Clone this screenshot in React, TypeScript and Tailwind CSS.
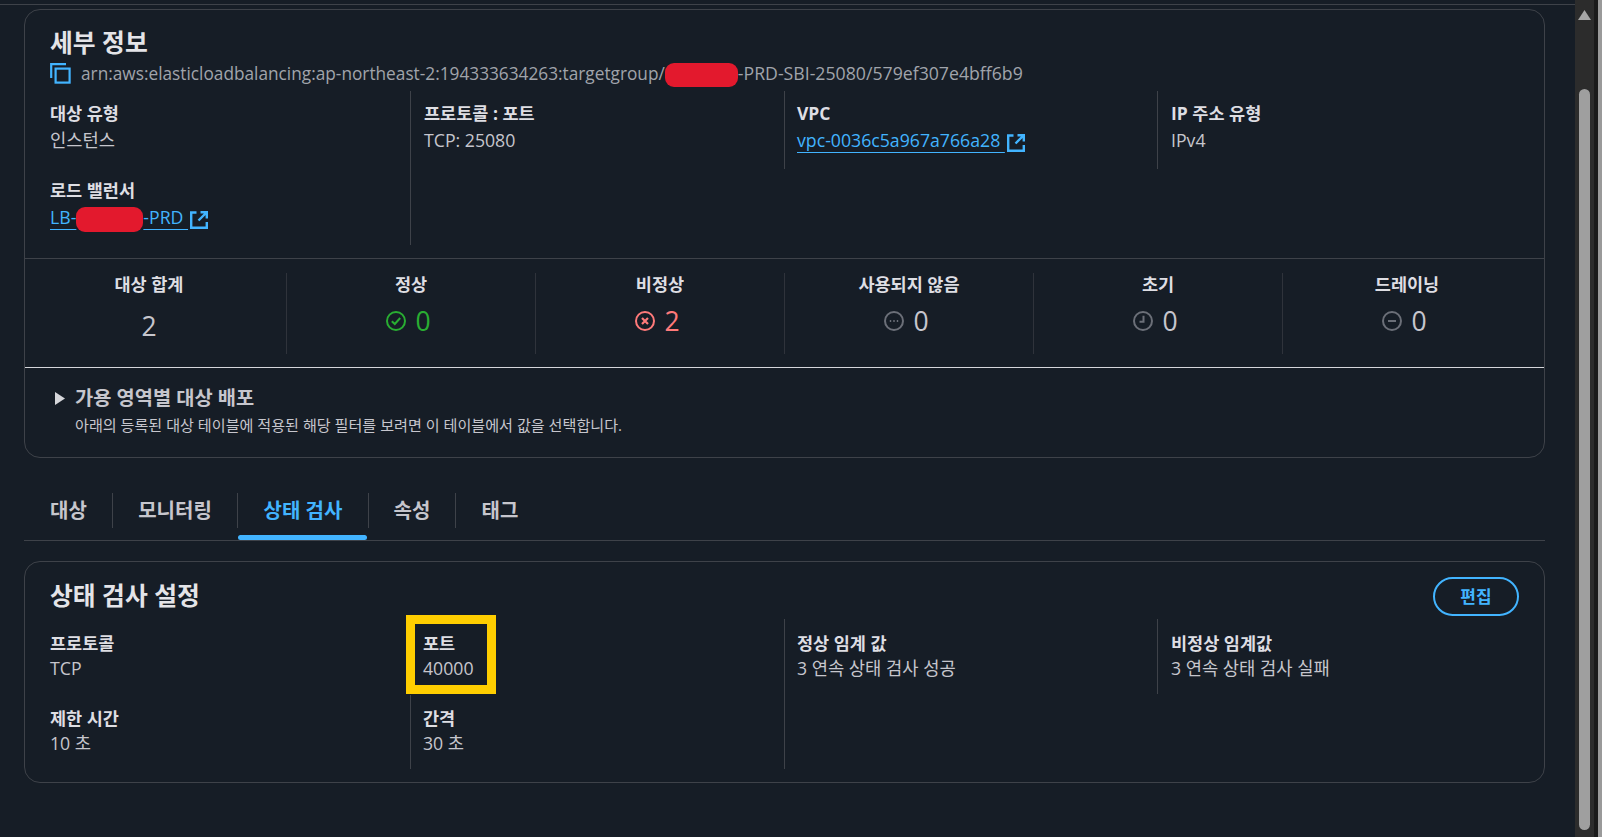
import React from 'react';

const FONT = { fontFamily: '"Open Sans", "Noto Sans CJK KR", sans-serif' };

function CopyIcon() {
  return (
    <svg width="21" height="21" viewBox="0 0 21 21" fill="none" stroke="#42b4ff" strokeWidth="2.2" className="shrink-0">
      <path d="M1.2 15V1.2H16" />
      <rect x="5.6" y="5.6" width="14" height="14" />
    </svg>
  );
}

function ExternalIcon() {
  return (
    <svg width="18" height="18" viewBox="0 0 18 18" fill="none" stroke="#42b4ff" strokeWidth="2.4" className="inline-block shrink-0">
      <path d="M6.5 1.5H1.2V16.8H16.8V11" />
      <path d="M10.5 1.2H16.8V7.5M16.5 1.5L8.5 9.5" />
    </svg>
  );
}

function StatusIcon({ kind }: { kind: 'ok' | 'bad' | 'unused' | 'init' | 'drain' }) {
  const color = kind === 'ok' ? '#29ad32' : kind === 'bad' ? '#ff7a7a' : '#6b6f78';
  return (
    <svg width="20" height="20" viewBox="0 0 20 20" fill="none" stroke={color} strokeWidth="2" className="shrink-0">
      <circle cx="10" cy="10" r="9" />
      {kind === 'ok' && <path d="M5.8 10.2L8.8 13L14.2 7" />}
      {kind === 'bad' && <path d="M7 7L13 13M13 7L7 13" strokeWidth="2.2" />}
      {kind === 'unused' && <path d="M5.8 10H7.2M9.3 10H10.7M12.8 10H14.2" />}
      {kind === 'init' && <path d="M10.5 4.8V10.8H6.5" />}
      {kind === 'drain' && <path d="M6 10H14" />}
    </svg>
  );
}

function Redact({ className }: { className: string }) {
  return <span className={`inline-block align-middle rounded-[9px] bg-[#e3192d] -my-1 ${className}`} />;
}

function Item({ label, tight, children }: { label: string; tight?: boolean; children: React.ReactNode }) {
  return (
    <div className={tight ? 'h-[75px] pt-[13px]' : 'h-[77px] pt-[11px]'}>
      <div className="text-[17.5px] leading-[23px] font-bold text-[#dedee3]">{label}</div>
      <div className={`text-[17.7px] leading-[23px] text-[#c6c6cd] ${tight ? 'mt-[2px]' : 'mt-[4px]'}`}>{children}</div>
    </div>
  );
}

function Stat({ label, value, kind, first }: { label: string; value: string; kind?: 'ok' | 'bad' | 'unused' | 'init' | 'drain'; first?: boolean }) {
  const valueColor = kind === 'ok' ? 'text-[#29ad32]' : kind === 'bad' ? 'text-[#ff7a7a]' : 'text-[#c6c6cd]';
  return (
    <div className={`h-[81px] flex flex-col items-center ${first ? 'w-[249px] pr-[25px]' : 'w-[249px] border-l border-[#2f333b]'}`}>
      <div className="text-[17.5px] leading-[23px] font-bold text-[#dedee3]">{label}</div>
      <div className={`flex items-center gap-[9px] text-[26.5px] leading-[30px] ${valueColor} ${first ? 'mt-[15px]' : 'mt-[10px] pr-[5px]'}`}>
        {kind && <StatusIcon kind={kind} />}
        <span>{value}</span>
      </div>
    </div>
  );
}

function Tab({ label, active, last, w }: { label: string; active?: boolean; last?: boolean; w: string }) {
  return (
    <div className={`relative h-[35px] ${w} flex items-center justify-center ${last ? '' : 'border-r border-[#3e4249]'}`}>
      <span className={`text-[20px] font-bold ${active ? 'text-[#42b4ff]' : 'text-[#c6c6cd]'}`}>{label}</span>
      {active && <div className="absolute left-0 right-[1px] top-[42px] h-[5px] rounded-[3px] bg-[#42b4ff]" />}
    </div>
  );
}

export default function App() {
  return (
    <div className="flex h-[837px] w-[1602px] overflow-hidden bg-[#161d26]" style={FONT}>
      <main className="w-[1575px] shrink-0 pt-[4px]">
        <div className="h-px bg-[#3e4249]" />
        <div className="pt-[4px] pl-[24px] w-[1545px]">
          {/* details card */}
          <section className="h-[449px] rounded-[16px] border border-[#3e4249]">
            <div className="px-[25px] pt-[16px]">
              <h2 className="text-[24.8px] leading-[33px] font-bold text-[#e4e4e8]">세부 정보</h2>
              <div className="flex items-center gap-[10px] mt-[3px] h-[22px]">
                <CopyIcon />
                <span className="text-[17.25px] whitespace-nowrap text-[#a0a4ab]">
                  arn:aws:elasticloadbalancing:ap-northeast-2:194333634263:targetgroup/<Redact className="w-[73px] h-[24px]" /><span className="text-[17.7px]">-PRD-SBI-25080/579ef307e4bff6b9</span>
                </span>
              </div>
            </div>
            <div className="grid grid-cols-[373px_374px_373px_373px] h-[153px] pl-[12px] mt-[7px]">
              <div className="pl-[13px]">
                <Item label="대상 유형">인스턴스</Item>
                <Item label="로드 밸런서">
                  <span className="text-[#42b4ff] underline decoration-1 underline-offset-[5px]">LB-<Redact className="w-[67px] h-[25px]" />-PRD&nbsp;</span>
                  <span className="inline-block align-[-1px] ml-[2px]"><ExternalIcon /></span>
                </Item>
              </div>
              <div className="pl-[13px] border-l border-[#3e4249]">
                <Item label="프로토콜 : 포트">TCP: 25080</Item>
              </div>
              <div className="pl-[12px] border-l border-[#3e4249] h-[78px]">
                <Item label="VPC">
                  <span className="text-[#42b4ff] underline decoration-1 underline-offset-[5px]">vpc-0036c5a967a766a28&nbsp;</span>
                  <span className="inline-block align-[-1px] ml-[2px]"><ExternalIcon /></span>
                </Item>
              </div>
              <div className="pl-[13px] border-l border-[#3e4249] h-[78px]">
                <Item label="IP 주소 유형">IPv4</Item>
              </div>
            </div>
            <div className="h-px mt-[14px] bg-[#3e4249]" />
            <div className="flex pt-[14px] pl-[12px] pb-[13px]">
              <Stat first label="대상 합계" value="2" />
              <Stat label="정상" value="0" kind="ok" />
              <Stat label="비정상" value="2" kind="bad" />
              <Stat label="사용되지 않음" value="0" kind="unused" />
              <Stat label="초기" value="0" kind="init" />
              <Stat label="드레이닝" value="0" kind="drain" />
            </div>
            <div className="h-px bg-[#d5d6da]" />
            <div className="flex pl-[30px] pt-[17px]">
              <svg width="10" height="13" viewBox="0 0 10 13" className="mt-[7px] shrink-0"><path d="M0 0L10 6.5L0 13Z" fill="#d5d6da" /></svg>
              <div className="ml-[10px]">
                <div className="text-[19.8px] leading-[26px] font-bold text-[#c6c6cd]">가용 영역별 대상 배포</div>
                <div className="text-[15.1px] leading-[20px] mt-[4px] text-[#c6c6cd]">아래의 등록된 대상 테이블에 적용된 해당 필터를 보려면 이 테이블에서 값을 선택합니다.</div>
              </div>
            </div>
          </section>

          {/* tabs */}
          <div className="flex items-center h-[48px] mt-[35px] border-b border-[#3e4249] pb-[12px] pl-px">
            <Tab label="대상" w="w-[88px]" />
            <Tab label="모니터링" w="w-[125px]" />
            <Tab active label="상태 검사" w="w-[131px]" />
            <Tab label="속성" w="w-[87px]" />
            <Tab last label="태그" w="w-[88px]" />
          </div>

          {/* health check card */}
          <section className="h-[222px] mt-[20px] rounded-[16px] border border-[#3e4249]">
            <div className="flex justify-between items-start pl-[25px] pr-[25px] pt-[15px]">
              <h2 className="text-[24.8px] leading-[36px] font-bold text-[#e4e4e8]">상태 검사 설정</h2>
              <button className="w-[86px] h-[39px] rounded-full border-2 border-[#42b4ff] text-[17px] font-bold text-[#42b4ff]">편집</button>
            </div>
            <div className="grid grid-cols-[373px_374px_373px_373px] pl-[12px] mt-[3px] h-[149px]">
              <div className="pl-[13px]">
                <Item tight label="프로토콜">TCP</Item>
                <Item tight label="제한 시간">10 초</Item>
              </div>
              <div className="relative pl-[13px]">
                <div className="absolute left-0 bottom-0 h-[74px] border-l border-[#3e4249]" />
                <Item tight label="포트">40000</Item>
                <Item tight label="간격">30 초</Item>
                <div className="absolute left-[-4px] top-[-4px] w-[90px] h-[79px] border-[9px] border-[#ffce00]" />
              </div>
              <div className="pl-[12px] border-l border-[#3e4249]">
                <Item tight label="정상 임계 값">3 연속 상태 검사 성공</Item>
              </div>
              <div className="pl-[13px] border-l border-[#3e4249] h-[75px]">
                <Item tight label="비정상 임계값">3 연속 상태 검사 실패</Item>
              </div>
            </div>
          </section>
        </div>
      </main>

      {/* browser scrollbar */}
      <div className="relative w-[19px] shrink-0 bg-[#2c2c2c]">
        <svg width="13" height="10" viewBox="0 0 13 10" className="absolute left-[3px] top-[10px]"><path d="M6.5 0L13 10H0Z" fill="#a6a6a6" /></svg>
        <div className="absolute left-[4px] top-[89px] w-[11px] h-[741px] rounded-full bg-[#9f9f9f]" />
      </div>
      <div className="w-[4px] shrink-0 bg-[#1a1a1a]" />
      <div className="flex-1 bg-[#9a9a9a]" />
    </div>
  );
}
